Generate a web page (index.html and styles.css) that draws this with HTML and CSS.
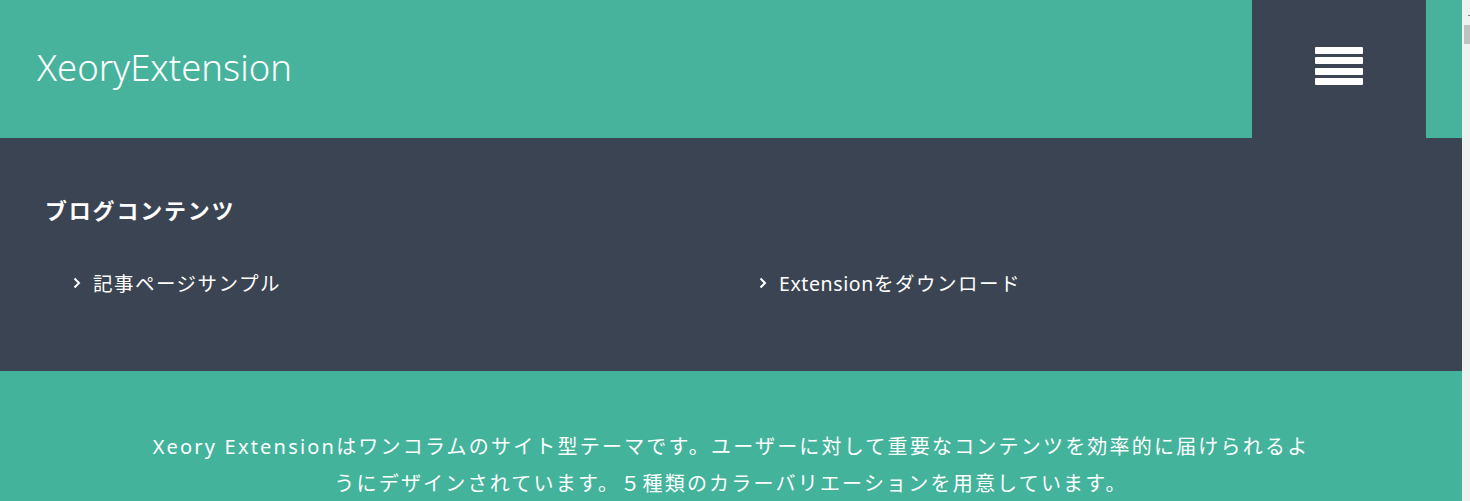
FILE: index.html
```html
<!DOCTYPE html>
<html lang="ja">
<head>
<meta charset="utf-8">
<title>XeoryExtension</title>
<link rel="stylesheet" href="styles.css">
</head>
<body>
<div class="page">
  <div class="main">
    <header class="site-header">
      <div class="logo">XeoryExtension</div>
      <div class="menu-btn">
        <div class="burger">
          <span></span><span></span><span></span><span></span>
        </div>
      </div>
    </header>
    <nav class="global-nav">
      <h2 class="nav-title">ブログコンテンツ</h2>
      <ul class="nav-list">
        <li><svg class="chev" viewBox="0 0 8 12" width="8" height="12"><path d="M1.5 1.5 L6 6 L1.5 10.5" fill="none" stroke="#fff" stroke-width="2"/></svg><span>記事ページサンプル</span></li>
        <li><svg class="chev" viewBox="0 0 8 12" width="8" height="12"><path d="M1.5 1.5 L6 6 L1.5 10.5" fill="none" stroke="#fff" stroke-width="2"/></svg><span><span class="latin">Extension</span>をダウンロード</span></li>
      </ul>
    </nav>
    <section class="intro">
      <p>Xeory Extensionはワンコラムのサイト型テーマです。ユーザーに対して重要なコンテンツを効率的に届けられるようにデザインされています。５種類のカラーバリエーションを用意しています。</p>
    </section>
  </div>
  <div class="scrollbar">
    <div class="sb-arrow"></div>
    <div class="sb-thumb"></div>
  </div>
</div>
</body>
</html>
```
FILE: styles.css
```css
html, body {
  margin: 0;
  padding: 0;
  height: 100%;
  overflow: hidden;
}
body {
  font-family: "Noto Sans", "Noto Sans CJK JP", sans-serif;
  color: #fff;
  background: #44b39c;
}
.page {
  display: flex;
  height: 501px;
}
.main {
  flex: 1;
  min-width: 0;
}
.site-header {
  height: 138px;
  background: #48b39c;
  display: flex;
  align-items: center;
  justify-content: space-between;
  padding: 0 36px 0 37px;
}
.logo {
  font-size: 36.5px;
  font-weight: 300;
  letter-spacing: 0;
  padding-bottom: 4px;
}
.menu-btn {
  width: 174px;
  height: 138px;
  background: #3b4452;
  display: flex;
  align-items: center;
  justify-content: center;
  padding-bottom: 6px;
  box-sizing: border-box;
}
.burger {
  display: flex;
  flex-direction: column;
  gap: 3.5px;
  width: 48px;
}
.burger span {
  display: block;
  height: 7px;
  background: #fff;
  border-radius: 1px;
}
.global-nav {
  background: #3b4452;
  padding: 56px 45px 72px;
}
.nav-title {
  margin: 0;
  font-size: 22px;
  line-height: 33px;
  font-weight: 700;
  letter-spacing: 1.8px;
}
.nav-list {
  list-style: none;
  margin: 42px 0 0;
  padding: 0;
  display: grid;
  grid-template-columns: 1fr 1fr;
}
.nav-list li {
  display: flex;
  align-items: center;
  gap: 12px;
  padding-left: 28px;
  font-size: 19.5px;
  line-height: 30px;
  letter-spacing: 1.5px;
}
.nav-list .latin {
  letter-spacing: 0.6px;
}
.chev {
  flex: none;
  margin-top: -2px;
}
.intro {
  background: #43b39c;
  padding: 57px 0 40px;
  display: flex;
  justify-content: center;
}
.intro p {
  margin: 0;
  max-width: 1164px;
  text-align: center;
  font-size: 20px;
  line-height: 37px;
  letter-spacing: 2.2px;
}
.scrollbar {
  width: 8px;
  flex: none;
  background: #f1f1f1;
  display: flex;
  flex-direction: column;
  align-items: flex-end;
}
.sb-arrow {
  width: 2px;
  height: 1px;
  background: #888;
  margin-top: 15px;
}
.sb-thumb {
  width: 6px;
  height: 19px;
  background: #c1c1c1;
  margin-top: 9px;
}
```
